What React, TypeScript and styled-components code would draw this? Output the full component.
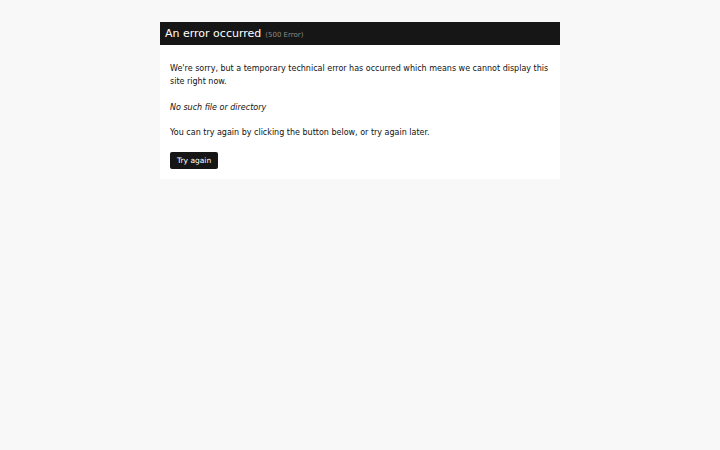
import React from "react";
import styled, { createGlobalStyle } from "styled-components";

const GlobalStyle = createGlobalStyle`
  html, body {
    margin: 0;
    padding: 0;
    background: #f8f8f8;
    font-family: "DejaVu Sans", Verdana, sans-serif;
    color: #111;
  }
`;

const Page = styled.div`
  display: flex;
  align-items: flex-start;
  justify-content: center;
  padding-top: 22px;
  min-height: 450px;
  box-sizing: border-box;
`;

const Card = styled.div`
  width: 400px;
  background: #fff;
`;

const Header = styled.div`
  display: flex;
  align-items: baseline;
  gap: 4px;
  height: 23px;
  padding: 0 5px;
  background: #161616;
  color: #fff;
  line-height: 23px;
`;

const Title = styled.h1`
  margin: 0;
  font-size: 11px;
  font-weight: normal;
`;

const Code = styled.span`
  font-size: 7px;
  color: #8a8a8a;
`;

const Body = styled.div`
  padding: 17px 10px 10px;
  font-size: 8px;
  line-height: 13px;
`;

const Text = styled.p<{ $italic?: boolean }>`
  margin: 0 0 12.5px;
  font-style: ${(p) => (p.$italic ? "italic" : "normal")};
`;

const Button = styled.button`
  display: block;
  height: 17px;
  padding: 0 7px;
  border: 0;
  border-radius: 2px;
  background: #161616;
  color: #fff;
  font-family: inherit;
  font-size: 7.5px;
  cursor: pointer;
`;

export default function App() {
  return (
    <>
      <GlobalStyle />
      <Page>
        <Card>
          <Header>
            <Title>An error occurred</Title>
            <Code>(500 Error)</Code>
          </Header>
          <Body>
            <Text>
              We're sorry, but a temporary technical error has occurred which
              means we cannot display this site right now.
            </Text>
            <Text $italic>No such file or directory</Text>
            <Text>
              You can try again by clicking the button below, or try again
              later.
            </Text>
            <Button>Try again</Button>
          </Body>
        </Card>
      </Page>
    </>
  );
}
